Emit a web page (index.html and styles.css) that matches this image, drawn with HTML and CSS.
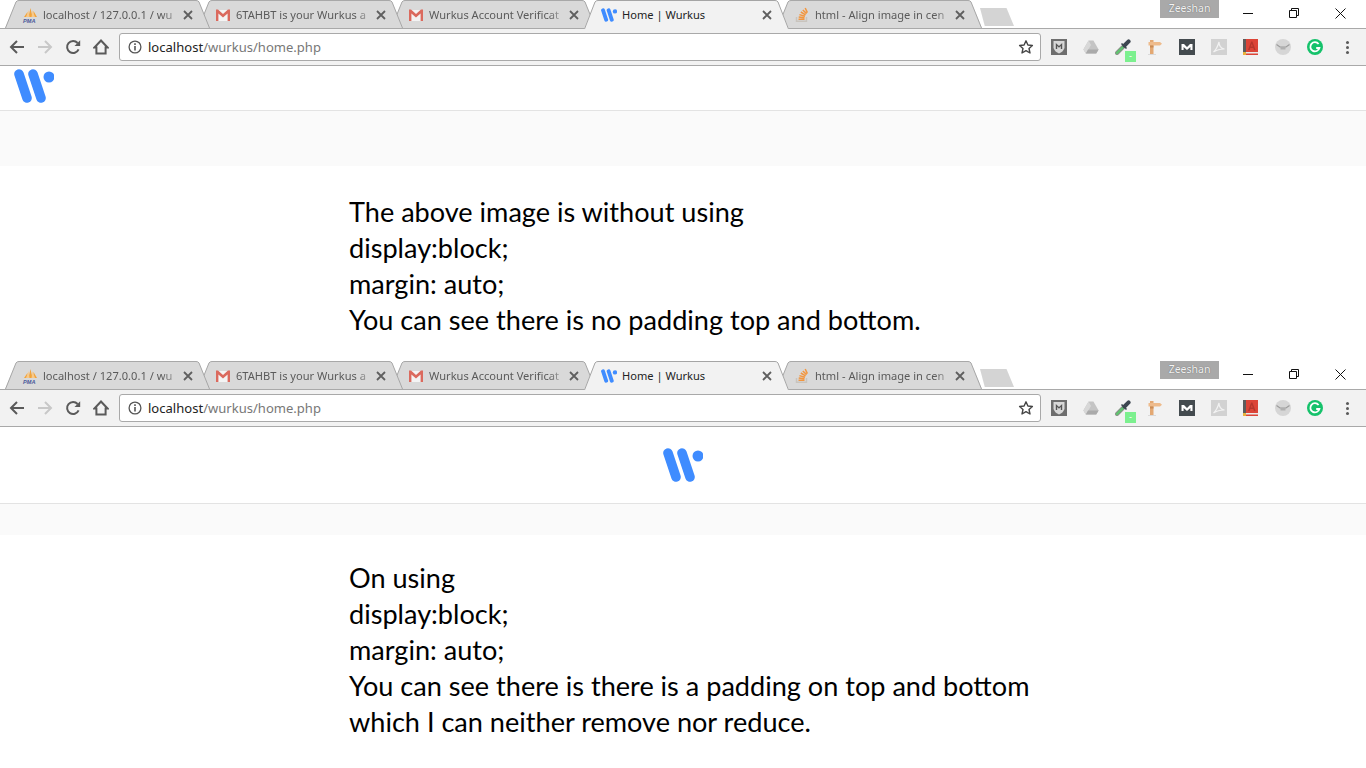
FILE: index.html
```html
<!DOCTYPE html>
<html lang="en">

<head>
    <meta charset="UTF-8">
    <meta name="viewport" content="width=device-width, initial-scale=1.0">
    <title>Home | Wurkus</title>
    <link rel="stylesheet" href="styles.css">
</head>

<body>
    <!-- shared icons -->
    <svg class="sprite" aria-hidden="true">
        <symbol id="i-tab" viewBox="0 0 205 29" preserveAspectRatio="none">
            <path class="tab-fill" d="M0 29 L11 2 Q12 .5 14 .5 L191 .5 Q193 .5 194 2 L205 29 Z" />
            <path class="tab-line" d="M.5 29 L11 2 Q12 .5 14 .5 L191 .5 Q193 .5 194 2 L204.5 29" />
        </symbol>
        <symbol id="i-pma" viewBox="0 0 16 16">
            <path fill="#f2a33a" d="M2 10 L5.5 5 L6 10 Z M6.5 10 L8.5 1 L10.5 10 Z M11 10 L11.5 4 L15 10 Z" />
            <path fill="#f7c98a" d="M4 10 L6.5 3 L7.5 10 Z M9.5 10 L10.5 3 L13 10 Z" />
            <text class="pma-text" x="1" y="15.5">PMA</text>
        </symbol>
        <symbol id="i-gmail" viewBox="0 0 16 16">
            <path fill="#f4f4f4" d="M1 3 H15 V14 H1 Z" />
            <path fill="#db6a5e" d="M1 2.5 L3 2.5 L8 7 L13 2.5 L15 2.5 V14 H12.6 V6.5 L8 10.4 L3.4 6.5 V14 H1 Z" />
        </symbol>
        <symbol id="i-so" viewBox="0 0 16 16">
            <path fill="none" stroke="#c9c4bd" stroke-width="1.4" d="M2.5 10 V14.3 H12.5 V10" />
            <path fill="none" stroke="#f2963f" stroke-width="1.5" d="M4.5 12.3 H10.5 M4.7 10 L10.5 10.8 M5.4 7.6 L11 9.3 M6.8 5 L11.6 7.8 M8.8 3 L12.6 6.6 M11.2 1 L13.4 5.6" />
        </symbol>
        <symbol id="i-wurkus" viewBox="0 0 40 34">
            <path fill="none" stroke="#3f8cff" stroke-width="9.6" stroke-linecap="round" d="M5 5 L13 29 M19 5 L27 29" />
            <circle cx="35" cy="8" r="5.5" fill="#3f8cff" />
        </symbol>
        <symbol id="i-close" viewBox="0 0 10 10">
            <path fill="none" stroke="currentColor" stroke-width="1.8" d="M1 1 L9 9 M9 1 L1 9" />
        </symbol>
        <symbol id="i-winclose" viewBox="0 0 11 11">
            <path fill="none" stroke="#111" d="M.5 .5 L10.5 10.5 M10.5 .5 L.5 10.5" />
        </symbol>
        <symbol id="i-back" viewBox="0 0 16 16">
            <path fill="none" stroke="currentColor" stroke-width="2" d="M15 8 H2 M8 2 L2 8 L8 14" />
        </symbol>
        <symbol id="i-forward" viewBox="0 0 16 16">
            <path fill="none" stroke="currentColor" stroke-width="2" d="M1 8 H14 M8 2 L14 8 L8 14" />
        </symbol>
        <symbol id="i-reload" viewBox="0 0 16 16">
            <path fill="none" stroke="currentColor" stroke-width="2" d="M13.6 10.4 A6 6 0 1 1 12.6 4" />
            <path fill="currentColor" d="M9.5 7 H15.2 V1.2 Z" />
        </symbol>
        <symbol id="i-home" viewBox="0 0 16 16">
            <path fill="none" stroke="currentColor" stroke-width="2" stroke-linejoin="miter" d="M8 1.5 L14.6 8.5 H12.6 V14.6 H3.4 V8.5 H1.4 Z" />
        </symbol>
        <symbol id="i-info" viewBox="0 0 14 14">
            <circle cx="7" cy="7" r="5.9" fill="none" stroke="currentColor" stroke-width="1.3" />
            <path fill="currentColor" d="M6.2 3.3 H7.8 V4.9 H6.2 Z M6.2 6 H7.8 V10.6 H6.2 Z" />
        </symbol>
        <symbol id="i-star" viewBox="0 0 16 16">
            <path fill="none" stroke="currentColor" stroke-width="1.4" stroke-linejoin="round" d="M8 1.8 L9.9 6 L14.4 6.5 L11 9.5 L12 14 L8 11.7 L4 14 L5 9.5 L1.6 6.5 L6.1 6 Z" />
        </symbol>
        <symbol id="i-min" viewBox="0 0 10 10">
            <path stroke="#111" d="M0 5.5 H10" />
        </symbol>
        <symbol id="i-restore" viewBox="0 0 10 10">
            <path fill="none" stroke="#111" d="M.5 2.5 H7.5 V9.5 H.5 Z M2.5 2.5 V.5 H9.5 V7.5 H7.5" />
        </symbol>
        <symbol id="i-shield" viewBox="0 0 16 16">
            <path fill="#6e6e6e" d="M0 0 H16 V16 H0 Z" />
            <path fill="#d8d8d8" d="M2.5 2 H13.5 V9 Q12 13 8 14.5 Q4 13 2.5 9 Z" />
            <path fill="#555" d="M4.8 10 V4 L8 7 L11.2 4 V10 H9.8 V7 L8 8.8 L6.2 7 V10 Z" />
        </symbol>
        <symbol id="i-drive" viewBox="0 0 16 16">
            <path fill="#c4c4c4" d="M5.6 1.5 H10.4 L15.6 10.5 L13.2 14.5 H2.8 L.4 10.5 Z" />
            <path fill="#d8d8d8" d="M5.6 1.5 L8 6 L2.8 14.5 L.4 10.5 Z" />
            <path fill="#aaa" d="M5 10.5 H15.6 L13.2 14.5 H2.8 Z" />
        </symbol>
        <symbol id="i-dropper" viewBox="0 0 16 16">
            <path fill="none" stroke="#8a9088" stroke-width="4" stroke-linecap="round" d="M2 14 L8 8" />
            <path fill="none" stroke="#5fc46f" stroke-width="2.4" stroke-linecap="round" d="M2 14 L8 8" />
            <path fill="none" stroke="#3c4650" stroke-width="4" stroke-linecap="round" d="M9.5 6.5 L13.6 2.4" />
            <path fill="none" stroke="#3c4650" stroke-width="1.6" d="M6.5 4.5 L11.5 9.5" />
        </symbol>
        <symbol id="i-sign" viewBox="0 0 16 16">
            <path fill="#e3a873" d="M3 1 H6.5 V15 H3 Z" />
            <path fill="#eebb8c" d="M1.5 3 H13 L15 4.8 L13 6.5 H1.5 Z" />
            <path fill="#c98a55" d="M3 6.5 H6.5 V8.5 H3 Z" />
            <path fill="#d9d9d9" d="M1 15 H9 V16 H1 Z" />
        </symbol>
        <symbol id="i-mbox" viewBox="0 0 16 16">
            <path fill="#444b4f" d="M0 0 H16 V16 H0 Z" />
            <path fill="#fff" d="M2.5 11 V5 H5 L8 8 L11 5 H13.5 V11 H11.4 V8 L8 11 L4.6 8 V11 Z" />
        </symbol>
        <symbol id="i-pdf" viewBox="0 0 16 16">
            <path fill="#d2d2d2" d="M0 0 H16 V16 H0 Z" />
            <path fill="none" stroke="#f2f2f2" stroke-width="1.2" d="M2.5 13 Q6 10 8 3 Q8 9 13.5 10 Q7 10 2.5 13 Z" />
        </symbol>
        <symbol id="i-book" viewBox="0 0 16 16">
            <path fill="#dc4437" d="M2 0 H15 V13 H2 Z" />
            <path fill="#5c5c5c" d="M0 0 H3 V14 H0 Z" />
            <path fill="#e9e9e9" d="M1 13 H15 V16 H1 Z" />
            <path fill="#dc4437" d="M3 14.5 H15 V16 H3 Z" />
            <path fill="#e9b23a" d="M0 13 H3 V16 H0 Z" />
            <path fill="#b5362c" d="M5 11 L8.2 2.5 H9.4 L12.6 11 H11 L10.3 9 H7.3 L6.6 11 Z M7.8 7.6 H9.8 L8.8 4.8 Z" />
        </symbol>
        <symbol id="i-round" viewBox="0 0 16 16">
            <circle cx="8" cy="8" r="8" fill="#d6d6d6" />
            <path fill="none" stroke="#9c9c9c" stroke-width="1.2" d="M1.5 5.5 L5 8 H11 L14.5 5.5" />
            <path fill="#b0b0b0" d="M5.5 8 H10.5 V10.5 H5.5 Z" />
        </symbol>
        <symbol id="i-grammarly" viewBox="0 0 16 16">
            <circle cx="8" cy="8" r="8" fill="#15c26b" />
            <path fill="none" stroke="#fff" stroke-width="1.8" d="M11.6 5 A4.6 4.6 0 1 0 12.4 9 H9.2" />
        </symbol>
    </svg>

    <section>
        <div class="chrome">
            <div class="strip">
                <div class="tabs">
                    <div class="tab"><svg class="tab-shape"><use href="#i-tab" /></svg><svg class="fav"><use href="#i-pma" /></svg><span class="tab-title">localhost / 127.0.0.1 / wu</span><svg class="tab-close"><use href="#i-close" /></svg></div>
                    <div class="tab"><svg class="tab-shape"><use href="#i-tab" /></svg><svg class="fav"><use href="#i-gmail" /></svg><span class="tab-title">6TAHBT is your Wurkus a</span><svg class="tab-close"><use href="#i-close" /></svg></div>
                    <div class="tab"><svg class="tab-shape"><use href="#i-tab" /></svg><svg class="fav"><use href="#i-gmail" /></svg><span class="tab-title">Wurkus Account Verificat</span><svg class="tab-close"><use href="#i-close" /></svg></div>
                    <div class="tab active"><svg class="tab-shape"><use href="#i-tab" /></svg><svg class="fav"><use href="#i-wurkus" /></svg><span class="tab-title">Home | Wurkus</span><svg class="tab-close"><use href="#i-close" /></svg></div>
                    <div class="tab"><svg class="tab-shape"><use href="#i-tab" /></svg><svg class="fav"><use href="#i-so" /></svg><span class="tab-title">html - Align image in cen</span><svg class="tab-close"><use href="#i-close" /></svg></div>
                </div>
                <div class="new-tab"></div>
                <div class="profile">Zeeshan</div>
                <div class="win-btn"><svg class="win-icon"><use href="#i-min" /></svg></div>
                <div class="win-btn"><svg class="win-icon"><use href="#i-restore" /></svg></div>
                <div class="win-btn"><svg class="win-icon win-close"><use href="#i-winclose" /></svg></div>
            </div>
            <div class="toolbar">
                <div class="nav-btn"><svg class="nav-icon"><use href="#i-back" /></svg></div>
                <div class="nav-btn off"><svg class="nav-icon"><use href="#i-forward" /></svg></div>
                <div class="nav-btn"><svg class="nav-icon"><use href="#i-reload" /></svg></div>
                <div class="nav-btn"><svg class="nav-icon"><use href="#i-home" /></svg></div>
                <div class="omnibox">
                    <svg class="info"><use href="#i-info" /></svg>
                    <span class="url"><span class="host">localhost</span>/wurkus/home.php</span>
                    <svg class="star"><use href="#i-star" /></svg>
                </div>
                <div class="extensions">
                    <svg class="ext"><use href="#i-shield" /></svg>
                    <svg class="ext"><use href="#i-drive" /></svg>
                    <span class="ext-badge"><svg class="ext"><use href="#i-dropper" /></svg><span class="badge">-</span></span>
                    <svg class="ext"><use href="#i-sign" /></svg>
                    <svg class="ext"><use href="#i-mbox" /></svg>
                    <svg class="ext"><use href="#i-pdf" /></svg>
                    <svg class="ext"><use href="#i-book" /></svg>
                    <svg class="ext"><use href="#i-round" /></svg>
                    <svg class="ext"><use href="#i-grammarly" /></svg>
                    <span class="dots"></span>
                </div>
            </div>
        </div>
        <header class="site-header"><svg class="logo"><use href="#i-wurkus" /></svg></header>
        <div class="band"></div>
        <p class="note">The above image is without using<br>display:block;<br>margin: auto;<br>You can see there is no padding top and bottom.</p>
    </section>

    <section>
        <div class="chrome">
            <div class="strip">
                <div class="tabs">
                    <div class="tab"><svg class="tab-shape"><use href="#i-tab" /></svg><svg class="fav"><use href="#i-pma" /></svg><span class="tab-title">localhost / 127.0.0.1 / wu</span><svg class="tab-close"><use href="#i-close" /></svg></div>
                    <div class="tab"><svg class="tab-shape"><use href="#i-tab" /></svg><svg class="fav"><use href="#i-gmail" /></svg><span class="tab-title">6TAHBT is your Wurkus a</span><svg class="tab-close"><use href="#i-close" /></svg></div>
                    <div class="tab"><svg class="tab-shape"><use href="#i-tab" /></svg><svg class="fav"><use href="#i-gmail" /></svg><span class="tab-title">Wurkus Account Verificat</span><svg class="tab-close"><use href="#i-close" /></svg></div>
                    <div class="tab active"><svg class="tab-shape"><use href="#i-tab" /></svg><svg class="fav"><use href="#i-wurkus" /></svg><span class="tab-title">Home | Wurkus</span><svg class="tab-close"><use href="#i-close" /></svg></div>
                    <div class="tab"><svg class="tab-shape"><use href="#i-tab" /></svg><svg class="fav"><use href="#i-so" /></svg><span class="tab-title">html - Align image in cen</span><svg class="tab-close"><use href="#i-close" /></svg></div>
                </div>
                <div class="new-tab"></div>
                <div class="profile">Zeeshan</div>
                <div class="win-btn"><svg class="win-icon"><use href="#i-min" /></svg></div>
                <div class="win-btn"><svg class="win-icon"><use href="#i-restore" /></svg></div>
                <div class="win-btn"><svg class="win-icon win-close"><use href="#i-winclose" /></svg></div>
            </div>
            <div class="toolbar">
                <div class="nav-btn"><svg class="nav-icon"><use href="#i-back" /></svg></div>
                <div class="nav-btn off"><svg class="nav-icon"><use href="#i-forward" /></svg></div>
                <div class="nav-btn"><svg class="nav-icon"><use href="#i-reload" /></svg></div>
                <div class="nav-btn"><svg class="nav-icon"><use href="#i-home" /></svg></div>
                <div class="omnibox">
                    <svg class="info"><use href="#i-info" /></svg>
                    <span class="url"><span class="host">localhost</span>/wurkus/home.php</span>
                    <svg class="star"><use href="#i-star" /></svg>
                </div>
                <div class="extensions">
                    <svg class="ext"><use href="#i-shield" /></svg>
                    <svg class="ext"><use href="#i-drive" /></svg>
                    <span class="ext-badge"><svg class="ext"><use href="#i-dropper" /></svg><span class="badge">-</span></span>
                    <svg class="ext"><use href="#i-sign" /></svg>
                    <svg class="ext"><use href="#i-mbox" /></svg>
                    <svg class="ext"><use href="#i-pdf" /></svg>
                    <svg class="ext"><use href="#i-book" /></svg>
                    <svg class="ext"><use href="#i-round" /></svg>
                    <svg class="ext"><use href="#i-grammarly" /></svg>
                    <span class="dots"></span>
                </div>
            </div>
        </div>
        <header class="site-header centered"><svg class="logo"><use href="#i-wurkus" /></svg></header>
        <div class="band short"></div>
        <p class="note second">On using<br>display:block;<br>margin: auto;<br>You can see there is there is a padding on top and bottom<br>which I can neither remove nor reduce.</p>
    </section>
</body>

</html>
```

FILE: styles.css
```css
body {
    margin: 0;
    background: #fff;
    font-family: "Lato", "Liberation Sans", sans-serif;
    color: #000;
    overflow: hidden;
}

.sprite {
    display: none;
}

.pma-text {
    font-family: "Liberation Sans", sans-serif;
    font-size: 5.6px;
    font-style: italic;
    font-weight: 700;
    fill: #4a5a9a;
}

/* browser window top */
.strip {
    display: flex;
    height: 28px;
    border-bottom: 1px solid #a9a9a9;
    padding-right: 3px;
    font-family: "Noto Sans", sans-serif;
}

.tabs {
    display: flex;
    padding-left: 5px;
    height: 29px;
}

.tab {
    position: relative;
    display: flex;
    align-items: center;
    flex: none;
    width: 205px;
    height: 29px;
    margin-right: -12px;
    padding: 0 17px 0 17px;
    box-sizing: border-box;
    font-size: 11.1px;
    color: #5a5a5a;
    --tab-bg: #d9d9d9;
}

.tab:nth-child(1) { z-index: 4; }
.tab:nth-child(2) { z-index: 3; }
.tab:nth-child(3) { z-index: 2; }
.tab:nth-child(4) { z-index: 6; }
.tab:nth-child(5) { z-index: 1; }

.tab-shape {
    position: absolute;
    left: 0;
    top: 0;
    width: 205px;
    height: 28px;
}

.tab-fill {
    fill: var(--tab-bg);
}

.tab-line {
    fill: none;
    stroke: #a5a5a5;
}

.tab.active {
    color: #222;
    --tab-bg: #f2f2f2;
}

.tab.active .tab-shape {
    height: 29px;
}

.fav,
.tab-title,
.tab-close {
    position: relative;
}

.fav {
    flex: none;
    width: 16px;
    height: 16px;
    margin-right: 5px;
}

.tab-title {
    flex: 1;
    white-space: nowrap;
    -webkit-mask-image: linear-gradient(to right, #000 85%, transparent 100%);
    mask-image: linear-gradient(to right, #000 85%, transparent 100%);
}

.tab.active .tab-title {
    -webkit-mask-image: none;
    mask-image: none;
}

.tab-close {
    flex: none;
    width: 10px;
    height: 10px;
    color: #5f5f5f;
}

.new-tab {
    flex: none;
    width: 34px;
    height: 18px;
    margin: 8px 0 0 10px;
    background: #d4d4d4;
    clip-path: polygon(0 0, 78% 0, 100% 100%, 14% 100%);
}

.profile {
    flex: none;
    width: 59px;
    height: 18px;
    margin-left: auto;
    margin-right: 6px;
    background: #a9a9a9;
    color: #f4f4f4;
    font-size: 10.5px;
    line-height: 17px;
    text-align: center;
    text-shadow: 0 0 1px #555;
}

.win-btn {
    display: flex;
    flex: none;
    align-items: center;
    justify-content: center;
    width: 46px;
    height: 26px;
}

.win-icon {
    width: 10px;
    height: 10px;
}

.win-close {
    width: 11px;
    height: 11px;
}

.toolbar {
    display: flex;
    align-items: center;
    height: 36px;
    padding-left: 3px;
    background: #f2f2f2;
    border-bottom: 1px solid #a9a9a9;
}

.nav-btn {
    display: flex;
    flex: none;
    align-items: center;
    justify-content: center;
    width: 28px;
    height: 28px;
    color: #5a5a5a;
}

.nav-btn.off {
    color: #c8c8c8;
}

.nav-icon {
    width: 16px;
    height: 16px;
}

.omnibox {
    display: flex;
    flex: 1;
    align-items: center;
    height: 26px;
    margin-left: 4px;
    padding: 0 6px 0 8px;
    background: #fff;
    border: 1px solid #a9a9a9;
    border-radius: 3px;
}

.info {
    flex: none;
    width: 14px;
    height: 14px;
    margin-right: 6px;
    color: #555;
}

.url {
    flex: 1;
    font-family: "Noto Sans", sans-serif;
    font-size: 13.05px;
    color: #777;
}

.host {
    color: #222;
}

.star {
    flex: none;
    width: 16px;
    height: 16px;
    color: #444;
}

.extensions {
    display: flex;
    flex: none;
    align-items: center;
    width: 320px;
    margin: 0 3px 0 2px;
}

.ext {
    flex: none;
    width: 16px;
    height: 16px;
    margin: 0 8px;
}

.ext-badge {
    position: relative;
    display: flex;
}

.badge {
    position: absolute;
    left: 18px;
    top: 12px;
    width: 11px;
    height: 11px;
    background: #7cf08f;
    color: #fff;
    font-size: 9px;
    font-family: "Liberation Sans", sans-serif;
    line-height: 11px;
    text-align: center;
}

.dots {
    width: 3px;
    height: 3px;
    margin-left: 15px;
    border-radius: 50%;
    background: #5a5a5a;
    box-shadow: 0 -5px 0 #5a5a5a, 0 5px 0 #5a5a5a;
}

/* the page inside */
.site-header {
    height: 44px;
    border-bottom: 1px solid #e3e3e3;
}

.site-header.centered {
    height: 76px;
}

.logo {
    display: block;
    width: 40px;
    height: 34px;
    margin-left: 14px;
    padding-top: 3px;
}

.centered .logo {
    margin: 0 auto;
    padding-top: 21px;
}

.band {
    height: 55px;
    background: #fafafa;
}

.band.short {
    height: 31px;
}

.note {
    width: 1100px;
    height: 195px;
    margin: 0;
    padding: 28px 0 0 349px;
    box-sizing: border-box;
    font-size: 27.1px;
    line-height: 36px;
}

.note.second {
    height: auto;
    padding-top: 25px;
}
```
